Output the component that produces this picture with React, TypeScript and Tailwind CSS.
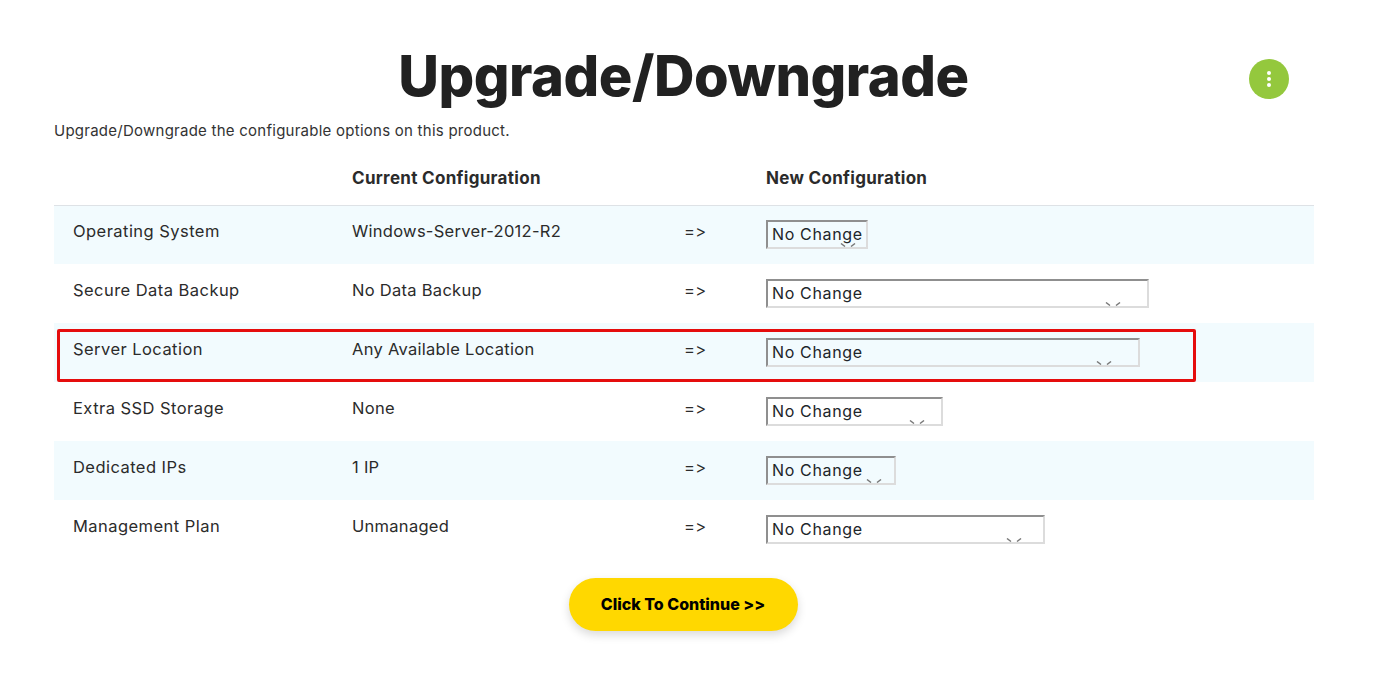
const rows = [
  { name: "Operating System", current: "Windows-Server-2012-R2", width: "w-[102px]", arrow: "right-[10px]", shaded: true },
  { name: "Secure Data Backup", current: "No Data Backup", width: "w-[383px]", arrow: "right-[26px]", shaded: false },
  { name: "Server Location", current: "Any Available Location", width: "w-[374px]", arrow: "right-[26px]", shaded: true },
  { name: "Extra SSD Storage", current: "None", width: "w-[177px]", arrow: "right-[16px]", shaded: false },
  { name: "Dedicated IPs", current: "1 IP", width: "w-[130px]", arrow: "right-[12px]", shaded: true },
  { name: "Management Plan", current: "Unmanaged", width: "w-[279px]", arrow: "right-[21px]", shaded: false },
];

function FakeSelect({ width, arrow }: { width: string; arrow: string }) {
  return (
    <div className={`${width} relative h-[29px] overflow-hidden border-2 border-t-[#8f8f8f] border-l-[#8f8f8f] border-r-[#dcdcdc] border-b-[#dcdcdc] pl-1 text-[16px] leading-[25px] tracking-[0.65px] text-[#212529]`}>
      No Change
      <svg className={`absolute bottom-0 ${arrow}`} width="16" height="4" viewBox="0 0 16 4" fill="none" stroke="#777" strokeWidth="1.4">
        <path d="M1 0.5 L5 3.5" />
        <path d="M15 0.5 L11 3.5" />
      </svg>
    </div>
  );
}

export default function App() {
  return (
    <div className="relative h-[692px] w-full overflow-hidden bg-white font-['Inter','Liberation_Sans',sans-serif] text-[#2b2b2b]">
      <div className="ml-[54px] w-[1260px]">
        <h1 className="pt-[40px] pr-px text-center text-[56px] leading-[72px] font-extrabold tracking-[-0.45px] text-[#212121]">Upgrade/Downgrade</h1>
        <p className="mt-2 text-[15px] leading-[21px] tracking-[0.25px] text-[#333]">Upgrade/Downgrade the configurable options on this product.</p>

        <table className="mt-[5px] w-full table-fixed border-collapse text-[16.5px] tracking-[0.35px]">
          <thead>
            <tr className="h-[59px] border-b border-[#dee2e6] text-left text-[17px] tracking-[0.3px]">
              <th className="w-[278px]" />
              <th className="w-[333px] pt-[7px] pl-5 font-bold">Current Configuration</th>
              <th className="w-[81px]" />
              <th className="pt-[7px] pl-5 font-bold">New Configuration</th>
            </tr>
          </thead>
          <tbody>
            {rows.map((row) => (
              <tr key={row.name} className={row.shaded ? "h-[59px] bg-[#f2fbfe]" : "h-[59px]"}>
                <td className="pb-[6px] pl-[19px] tracking-[0.45px]">{row.name}</td>
                <td className="pb-[6px] pl-5 tracking-[0.28px]">{row.current}</td>
                <td className="pb-[7px] pl-[19px]">=&gt;</td>
                <td className="pl-5">
                  <FakeSelect width={row.width} arrow={row.arrow} />
                </td>
              </tr>
            ))}
          </tbody>
        </table>

        <div className="mt-[19px] flex justify-center pr-[2px]">
          <button className="h-[53px] w-[229px] rounded-full bg-[#ffd800] pb-[2px] text-[16px] font-extrabold text-black shadow-[0_4px_10px_rgba(0,0,0,0.15)]">Click To Continue &gt;&gt;</button>
        </div>
      </div>

      <button className="absolute top-[59px] left-[1249px] flex h-10 w-10 flex-col items-center justify-center gap-[2px] rounded-full bg-[#94c83d]">
        <span className="h-1 w-1 rounded-full bg-white" />
        <span className="h-1 w-1 rounded-full bg-white" />
        <span className="h-1 w-1 rounded-full bg-white" />
      </button>

      {/* annotation drawn over the table */}
      <div className="absolute top-[329px] left-[57px] h-[53px] w-[1139px] rounded-[2px] border-[3px] border-[#e50d0d]" />
    </div>
  );
}
